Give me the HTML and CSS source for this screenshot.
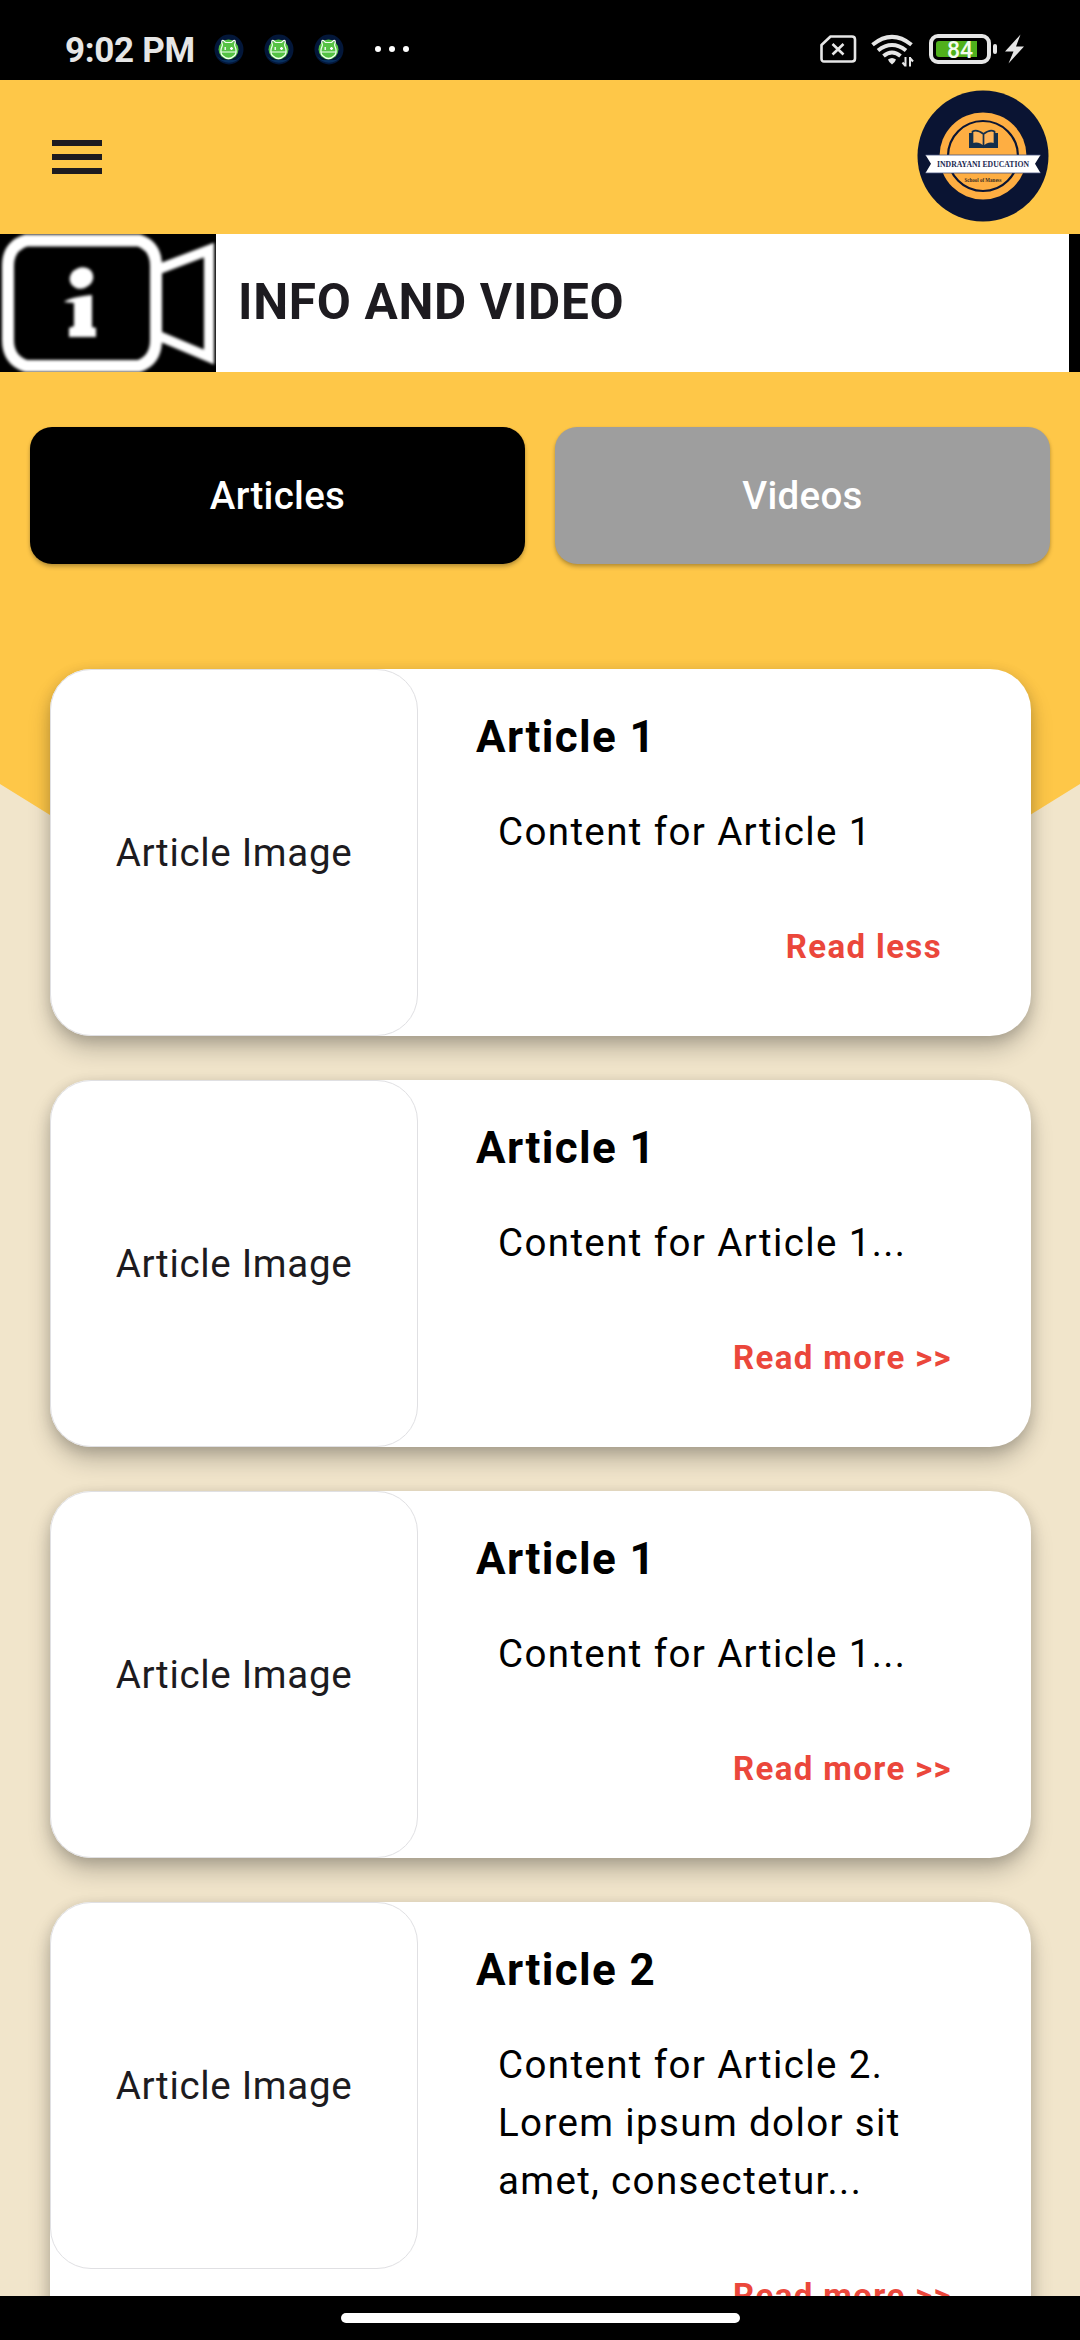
FILE: index.html
```html
<!DOCTYPE html>
<html lang="en">
<head>
<meta charset="utf-8">
<title>Info and Video</title>
<link rel="stylesheet" href="styles.css">
</head>
<body>
<svg class="defs" width="0" height="0">
  <symbol id="droid" viewBox="0 0 30 31">
    <ellipse cx="15" cy="15.500" rx="14.500" ry="15" fill="#03173a"/>
    <path d="M3 22a14 14 0 0 0 24 0L22 26H8z" fill="#08305f"/>
    <circle cx="14.500" cy="15.500" r="10" fill="#55c244"/>
    <path d="M8.500 11Q6.500 6 9.500 6.500L11.500 8.500H17.500L19.500 6.500Q22.500 6 20.500 11M8.500 11Q5 19 9 22Q14.500 27 20 22Q24 19 20.500 11M6.500 18H22.500" fill="none" stroke="#f4fff0" stroke-width="1.200"/>
    <path d="M11.200 13v3M16 14.500h3M17.500 13v3" stroke="#fff" stroke-width="1.300"/>
  </symbol>
</svg>
<div class="screen">
  <header class="status">
    <div class="status-left">
      <span class="clock">9:02 PM</span>
      <svg class="droid"><use href="#droid"/></svg>
      <svg class="droid"><use href="#droid"/></svg>
      <svg class="droid"><use href="#droid"/></svg>
      <span class="dots"><i></i><i></i><i></i></span>
    </div>
    <svg class="status-icons" width="210" height="40" viewBox="0 0 210 40">
      <path d="M10.500 6.500H32Q35 6.500 35 9.500V28.500Q35 31.500 32 31.500H4Q1.500 31.500 1.500 28.500V15z" fill="none" stroke="#e6e6e6" stroke-width="2.600" stroke-linejoin="round"/>
      <path d="M12.500 14l11 10.500M23.500 14l-11 10.500" stroke="#e6e6e6" stroke-width="2.600"/>
      <g fill="none" stroke="#e6e6e6" stroke-width="4">
        <path d="M52.500 14.800Q72 -1 91.500 14.800"/><path d="M58 20.500Q72 9.500 86 20.500"/><path d="M63.500 26Q72 19 80.500 26"/>
      </g>
      <path d="M68 29.500Q72 26.500 76 29.500Q75.500 31.500 72 34.500Q68.500 31.500 68 29.500z" fill="#e6e6e6"/>
      <path d="M85.500 27v9.500M85.500 36l-3-3.500M90 36.500V27M90 28l3 3.500" stroke="#e6e6e6" stroke-width="2" fill="none"/>
      <rect x="111" y="6" width="58" height="26" rx="7" fill="none" stroke="#e6e6e6" stroke-width="4"/>
      <path d="M119 11H157V27H119Q116 27 116 24V14Q116 11 119 11z" fill="#50b01c"/>
      <text x="127" y="28" class="battery">84</text>
      <rect x="173" y="14" width="4" height="10" rx="2" fill="#e6e6e6"/>
      <path d="M200.500 4.500L185 21.500H193.500L188.500 33.500L204 16.500H196z" fill="#e6e6e6"/>
    </svg>
  </header>

  <main class="page">
    <svg class="backdrop" width="1080" height="780" viewBox="0 0 1080 780"><path d="M0 0H1080V704L1030 735L960 779H120L50 735L0 704z" fill="#fec748"/></svg>
    <nav class="appbar">
      <span class="menu"><i></i><i></i><i></i></span>
      <svg class="logo" width="132" height="132" viewBox="0 0 132 132">
        <circle cx="66" cy="66" r="65.500" fill="#0a1433"/>
        <circle cx="66" cy="66" r="43.500" fill="#feae42"/>
        <circle cx="66" cy="66" r="35" fill="none" stroke="#0a1433" stroke-width="2.200"/>
        <g fill="#feb55a" stroke="#15304c" stroke-width="2">
          <path d="M53 43V57H80V43" fill="#15304c"/>
          <path d="M66.500 44Q60 39 55.500 41.500V54Q62 52 66.500 57Q71 52 77.500 54V41.500Q73 39 66.500 44zV57" stroke-width="1.700"/>
        </g>
        <path d="M8.500 65H123.500L118 73.700L123.500 83H8.500L14 73.700z" fill="#fff"/>
        <path d="M8.500 65H123.500M8.500 83H123.500" stroke="#44527c" stroke-width=".8"/>
        <text x="66" y="76.800" textLength="92" lengthAdjust="spacingAndGlyphs" class="logo-name">INDRAYANI EDUCATION</text>
        <text x="66" y="92" textLength="37" lengthAdjust="spacingAndGlyphs" class="logo-sub">School of Maness</text>
      </svg>
    </nav>

    <section class="banner">
      <svg width="216" height="138" viewBox="0 0 216 138">
        <rect width="216" height="138" fill="#000"/>
        <g class="soft" fill="none" stroke="#fff">
          <path d="M26 6.500H139Q156 12 156 32V106Q156 126 139 132H26Q8 126 8 106V32Q8 12 26 6.500z" stroke-width="12"/>
          <path d="M159 35L209 16V123L159 102" stroke-width="10"/>
        </g>
        <g class="soft" fill="#fff"><ellipse cx="81.500" cy="44" rx="12" ry="10.500" transform="rotate(-20 81.500 44)"/><path d="M64 68Q70 63 92 61V93L96 94V103H69V94L74 92V69z"/></g>
      </svg>
      <h1>INFO AND VIDEO</h1>
    </section>

    <div class="tabs"><button class="tab active">Articles</button><button class="tab">Videos</button></div>

    <section class="cards">
      <article class="card"><div class="thumb">Article Image</div><div class="body"><h2>Article 1</h2><p>Content for Article 1</p><a class="less">Read less</a></div></article>
      <article class="card"><div class="thumb">Article Image</div><div class="body"><h2>Article 1</h2><p>Content for Article 1...</p><a>Read more &gt;&gt;</a></div></article>
      <article class="card"><div class="thumb">Article Image</div><div class="body"><h2>Article 1</h2><p>Content for Article 1...</p><a>Read more &gt;&gt;</a></div></article>
      <article class="card"><div class="thumb">Article Image</div><div class="body"><h2>Article 2</h2><p>Content for Article 2. Lorem ipsum dolor sit amet, consectetur...</p><a>Read more &gt;&gt;</a></div></article>
    </section>
  </main>
  <footer class="gesture"><span></span></footer>
</div>
</body>
</html>
```

FILE: styles.css
```css
* { box-sizing: border-box; }
body { margin: 0; font-family: Roboto, sans-serif; }
.defs { position: absolute; }
.screen { width: 1080px; height: 2340px; display: flex; flex-direction: column; overflow: hidden; background: #000; }
.status { flex: none; height: 80px; display: flex; justify-content: space-between; padding: 0 50px 0 65px; color: #e6e6e6; }
.status-left { display: flex; align-items: center; padding-top: 18px; }
.clock { width: 149px; padding-top: 3px; font-size: 35px; font-weight: 700; line-height: 40px; letter-spacing: -.3px; white-space: nowrap; }
.droid { width: 30px; height: 31px; margin-right: 20px; }
.dots { display: flex; gap: 8px; margin-left: 11px; }
.dots i { width: 6px; height: 6px; border-radius: 50%; background: #fff; }
.status-icons { margin-top: 30px; }
.battery { font: 500 23px Roboto, sans-serif; fill: #f2fbee; }
.page { position: relative; flex: none; height: 2216px; overflow: hidden; background: #f1e5cb; }
.backdrop { position: absolute; left: 0; top: 0; }
.appbar { position: relative; height: 154px; display: flex; align-items: center; justify-content: space-between; padding: 0 31px 0 52px; }
.logo { margin-bottom: 2px; }
.menu { display: flex; flex-direction: column; gap: 8px; }
.menu i { width: 50px; height: 6px; background: #1d1b20; }
.logo-name { font: 700 9px "Liberation Serif", serif; fill: #1b2850; text-anchor: middle; }
.logo-sub { font: 700 5.5px "Liberation Serif", serif; fill: #3a2c22; text-anchor: middle; }
.banner { position: relative; height: 137.500px; display: flex; align-items: center; background: #fff; border-right: 11px solid #000; overflow: hidden; }
.banner svg { flex: none; }
.soft { filter: blur(1.500px); }
.banner h1 { margin: -2px 0 0 22px; font-size: 49.500px; font-weight: 700; letter-spacing: .69px; color: #1d1b20; white-space: nowrap; }
.tabs { position: relative; display: flex; gap: 30px; padding: 55px 30px 0; }
.tab { flex: 1; height: 137.500px; border: 0; border-radius: 22px; background: #9e9e9e; color: #fff; font: 500 38.500px Roboto, sans-serif; letter-spacing: .275px; box-shadow: 0 3px 4px rgba(0,0,0,.22), 0 1px 3px rgba(0,0,0,.1); }
.tab.active { background: #000; }
.cards { position: relative; display: flex; flex-direction: column; gap: 44px; padding: 105px 49px 0 50px; }
.card { display: flex; align-items: flex-start; min-height: 367px; border-radius: 41px; background: #fff; box-shadow: 0 14px 24px -2px rgba(0,0,0,.24), 0 3px 14px rgba(0,0,0,.15); }
.thumb { flex: none; width: 368px; height: 367px; display: flex; align-items: center; justify-content: center; border: 1px solid #e0e0e3; border-radius: 41px; color: #1d1b20; font-size: 38.500px; letter-spacing: .69px; }
.body { flex: 1; display: flex; flex-direction: column; padding: 35px 58px 60px; }
.body h2 { margin: 0; font-size: 44px; line-height: 66px; font-weight: 700; letter-spacing: 1.375px; }
.body p { margin: 33px 40px 0 22px; font-size: 38.500px; line-height: 58px; letter-spacing: 1.375px; }
.body a { align-self: flex-end; margin: 61px 21px 0 0; font-size: 33px; line-height: 50px; font-weight: 700; letter-spacing: 1.375px; color: #eb473b; }
.body .less { margin-right: 31px; }
.gesture { flex: none; height: 44px; display: flex; align-items: center; justify-content: center; }
.gesture span { width: 399px; height: 10px; border-radius: 5px; background: #fff; }
```
